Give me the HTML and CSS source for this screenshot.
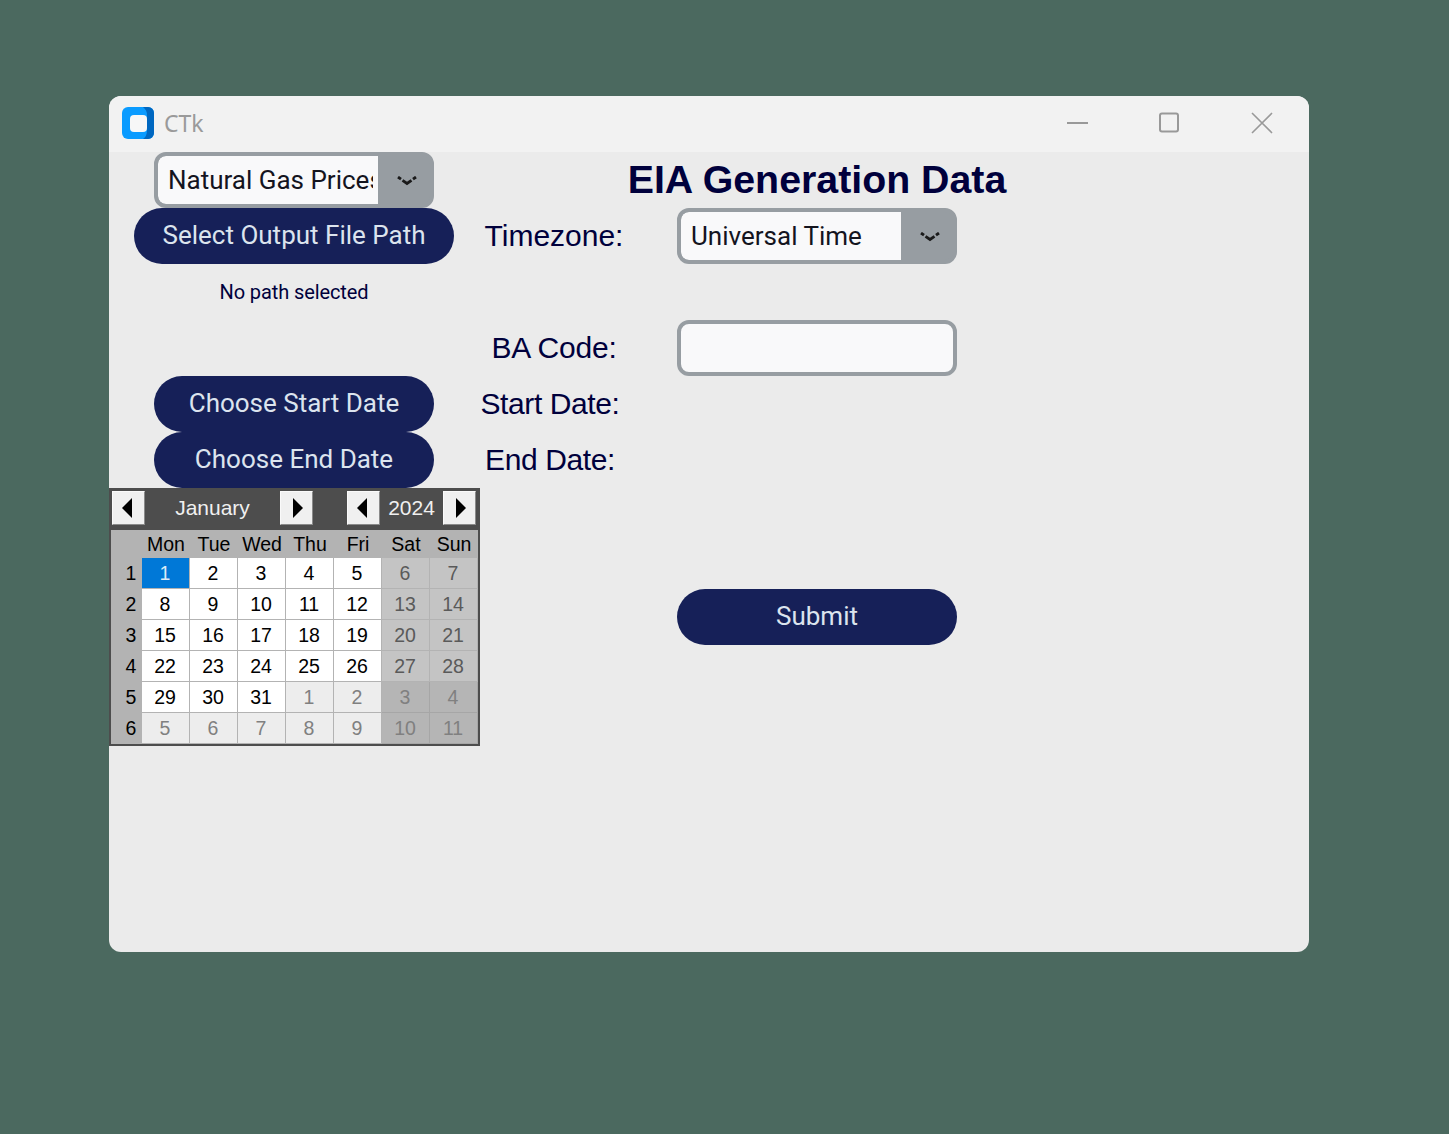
FILE: index.html
```html
<!DOCTYPE html>
<html lang="en">
<head>
<meta charset="utf-8">
<title>CTk</title>
<link rel="stylesheet" href="styles.css">
</head>
<body>
<div class="window">
  <header class="titlebar">
    <div class="title-left">
      <svg class="app-icon" width="32" height="32" viewBox="0 0 32 32">
        <rect width="32" height="32" rx="6" fill="#0a9bff"/>
        <path d="M21 0h5a6 6 0 0 1 6 6v20a6 6 0 0 1-6 6h-5a10 10 0 0 0 4-8V8a10 10 0 0 0-4-8z" fill="#0067c0"/>
        <rect x="8" y="8" width="17" height="17" rx="4" fill="#f7f7f7"/>
      </svg>
      <span class="app-name">CTk</span>
    </div>
    <div class="controls">
      <svg width="22" height="22" viewBox="0 0 22 22"><path d="M0 11h21" stroke="#999" stroke-width="2" fill="none"/></svg>
      <svg width="22" height="22" viewBox="0 0 22 22"><rect x="1" y="1.500" width="18" height="18" rx="2" stroke="#999" stroke-width="2" fill="none"/></svg>
      <svg width="22" height="22" viewBox="0 0 22 22"><path d="M1 1l20 20M21 1L1 21" stroke="#999" stroke-width="1.600" fill="none"/></svg>
    </div>
  </header>
  <main class="content">
    <div class="c1"><div class="combo"><div class="combo-field"><span>Natural Gas Prices</span></div><div class="combo-arrow"><svg width="20" height="10" viewBox="0 0 20 10"><path d="M1 1l3 2.200M5.500 4.400l4.500 3.100 4.500-3.100M16 3.200l3-2.200" stroke="#1a1a1a" stroke-width="2.800" fill="none"/></svg></div></div></div>
    <div></div>
    <h1 class="heading">EIA Generation Data</h1>

    <div class="c1"><button class="btn wide">Select Output File Path</button></div>
    <div class="label">Timezone:</div>
    <div class="c3"><div class="combo"><div class="combo-field"><span>Universal Time</span></div><div class="combo-arrow"><svg width="20" height="10" viewBox="0 0 20 10"><path d="M1 1l3 2.200M5.500 4.400l4.500 3.100 4.500-3.100M16 3.200l3-2.200" stroke="#1a1a1a" stroke-width="2.800" fill="none"/></svg></div></div></div>

    <div class="c1 path-note">No path selected</div>
    <div></div><div></div>

    <div></div>
    <div class="label ba">BA Code:</div>
    <div class="c3"><input class="entry" type="text" aria-label="BA Code"></div>

    <div class="c1"><button class="btn">Choose Start Date</button></div>
    <div class="label alt">Start Date:</div>
    <div></div>

    <div class="c1"><button class="btn">Choose End Date</button></div>
    <div class="label alt">End Date:</div>
    <div></div>

    <div class="calendar">
      <div class="cal-head">
        <button class="arrow left" aria-label="Previous month"></button>
        <span class="month">January</span>
        <button class="arrow right" aria-label="Next month"></button>
        <button class="arrow left year-prev" aria-label="Previous year"></button>
        <span class="year">2024</span>
        <button class="arrow right" aria-label="Next year"></button>
      </div>
      <div class="cal-grid">
        <span class="corner"></span><span class="dow">Mon</span><span class="dow">Tue</span><span class="dow">Wed</span><span class="dow">Thu</span><span class="dow">Fri</span><span class="dow">Sat</span><span class="dow">Sun</span>
        <span class="wk">1</span><span class="d sel">1</span><span class="d">2</span><span class="d">3</span><span class="d">4</span><span class="d">5</span><span class="d we">6</span><span class="d we">7</span>
        <span class="wk">2</span><span class="d">8</span><span class="d">9</span><span class="d">10</span><span class="d">11</span><span class="d">12</span><span class="d we">13</span><span class="d we">14</span>
        <span class="wk">3</span><span class="d">15</span><span class="d">16</span><span class="d">17</span><span class="d">18</span><span class="d">19</span><span class="d we">20</span><span class="d we">21</span>
        <span class="wk">4</span><span class="d">22</span><span class="d">23</span><span class="d">24</span><span class="d">25</span><span class="d">26</span><span class="d we">27</span><span class="d we">28</span>
        <span class="wk">5</span><span class="d">29</span><span class="d">30</span><span class="d">31</span><span class="d om">1</span><span class="d om">2</span><span class="d omwe">3</span><span class="d omwe">4</span>
        <span class="wk">6</span><span class="d om">5</span><span class="d om">6</span><span class="d om">7</span><span class="d om">8</span><span class="d om">9</span><span class="d omwe">10</span><span class="d omwe">11</span>
      </div>
    </div>
    <div></div>
    <div class="c3 submit-cell"><button class="btn">Submit</button></div>
  </main>
</div>
</body>
</html>
```
FILE: styles.css
```css
* { box-sizing: border-box; }
html, body { margin: 0; height: 100%; }
body { background: #4b695f; padding: 96px 0 0 109px; overflow: hidden; }

.window {
  width: 1200px;
  height: 856px;
  background: #ebebeb;
  border-radius: 12px;
  overflow: hidden;
}

.titlebar {
  height: 56px;
  background: #f2f2f2;
  display: flex;
  align-items: center;
  justify-content: space-between;
}
.title-left { display: flex; align-items: center; gap: 10px; padding-left: 13px; padding-bottom: 2px; }
.app-name { font: 23px "Noto Sans", sans-serif; color: #9a9a9a; }
.controls { display: flex; gap: 70px; padding-right: 36px; align-items: center; padding-bottom: 2px; }

.content {
  display: grid;
  grid-template-columns: 370px 198px 280px;
  grid-template-rows: repeat(6, 56px) 258px;
}
.c1 { display: flex; justify-content: center; align-items: center; }
.c3 { display: flex; align-items: center; }

.heading {
  margin: 0 -60px;
  font: bold 39.300px/54px "Liberation Sans", Arial, sans-serif;
  color: #00003c;
  text-align: center;
  white-space: nowrap;
}

.label {
  font: 30px/56px "Liberation Sans", Arial, sans-serif;
  color: #00003c;
  text-align: center;
  padding-right: 48px;
  white-space: nowrap;
}
.label.ba { letter-spacing: -0.200px; }
.label.alt { padding-right: 56px; letter-spacing: -0.400px; }

.path-note { font: 20px Roboto, sans-serif; color: #00003c; letter-spacing: -0.100px; }

.combo {
  width: 280px;
  height: 56px;
  border: 4px solid #979da2;
  border-radius: 12px;
  background: #979da2;
  display: flex;
  overflow: hidden;
}
.combo-field {
  width: 220px;
  background: #f9f9fa;
  border-radius: 8px 0 0 8px;
  padding: 0 5px 0 10px;
  overflow: hidden;
  white-space: nowrap;
  font: 26px/48px Roboto, sans-serif;
  color: #14141e;
}
.combo-field span { display: block; overflow: hidden; }
.combo-arrow { flex: 1; display: flex; align-items: center; justify-content: center; padding: 2px 0 0 5px; }

.btn {
  width: 280px;
  height: 56px;
  border: 0;
  padding: 0 0 2px;
  border-radius: 28px;
  background: #162058;
  color: #dce4ee;
  font: 26px Roboto, sans-serif;
}
.btn.wide { width: 320px; }

.entry {
  width: 280px;
  height: 56px;
  border: 4px solid #979da2;
  border-radius: 12px;
  background: #f9f9fa;
  outline: 0;
  padding: 0 10px;
}

.submit-cell { align-self: center; }

.calendar {
  width: 371px;
  height: 258px;
  border: 2px solid #4d4d4d;
  border-top-width: 0;
  background: #b3b3b3;
  font-family: "Liberation Sans", Arial, sans-serif;
}
.cal-head {
  height: 42px;
  background: #4d4d4d;
  display: flex;
  align-items: center;
  padding: 0 2px 3px 1px;
  color: #f0f0f0;
  font-size: 21px;
}
.arrow {
  width: 33px;
  height: 34px;
  flex: none;
  padding: 0;
  background: #f0f0f0;
  border: 1px solid;
  border-color: #fafafa #8a8a8a #8a8a8a #fafafa;
  display: flex;
  align-items: center;
  justify-content: center;
}
.arrow::before {
  content: "";
  border-style: solid;
  border-width: 10px 0 10px 10px;
  border-color: transparent transparent transparent #000;
  margin-left: 3px;
}
.arrow.left::before {
  border-width: 10px 10px 10px 0;
  border-color: transparent #000 transparent transparent;
  margin: 0 3px 0 0;
}
.month { width: 135px; text-align: center; }
.year-prev { margin-left: 34px; }
.year { width: 63px; text-align: center; }

.cal-grid {
  display: grid;
  grid-template-columns: 31px repeat(7, 48px);
  grid-template-rows: 28px repeat(6, 31px);
  font-size: 19.500px;
}
.dow, .wk, .d { display: flex; align-items: center; justify-content: center; }
.dow { color: #000; }
.wk { color: #000; padding-left: 9px; }
.d { background: #fff; color: #000; border-right: 1px solid #b3b3b3; border-bottom: 1px solid #b3b3b3; padding-right: 1px; }
.d.sel { background: #0078d7; color: #dcebf7; }
.d.we { background: #c4c4c4; color: #5a5a5a; }
.d.om { background: #ededed; color: #808080; }
.d.omwe { background: #b5b5b5; color: #808080; border-color: #a6a6a6; }
```
